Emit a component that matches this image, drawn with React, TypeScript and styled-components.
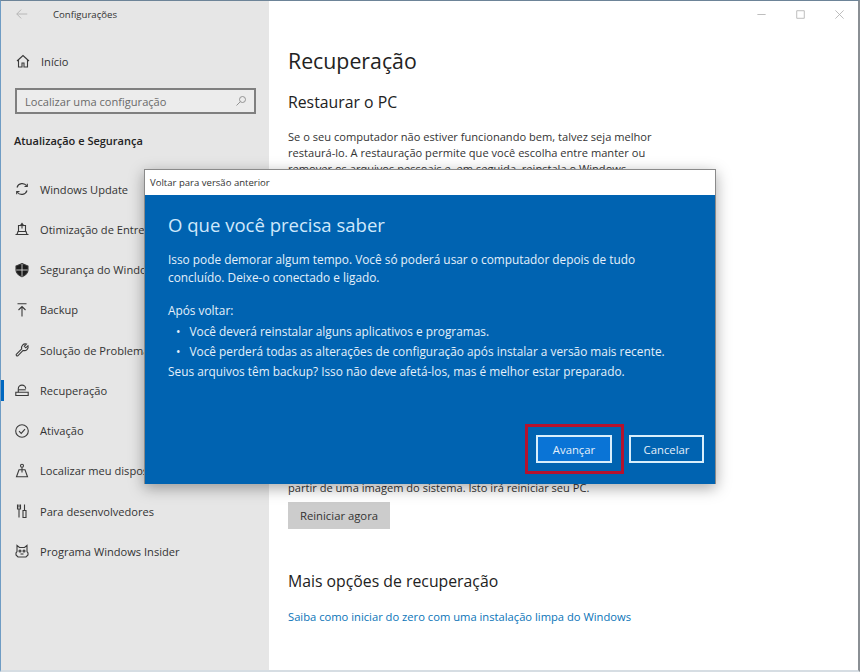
import React from 'react';
import styled, { createGlobalStyle } from 'styled-components';

const Global = createGlobalStyle`
  html, body { margin: 0; padding: 0; background: #fff; }
  body { font-family: "Open Sans", "Noto Sans", "Liberation Sans", sans-serif; color: #222; }
  * { box-sizing: border-box; }
`;
const Win = styled.div`
  position: relative; width: 860px; height: 672px; display: flex; overflow: hidden;
  border-top: 1px solid #6d8498; border-left: 1px solid #6f9cc4; border-right: 2px solid #8a8f94; border-bottom: 2px solid #d6dde3;
`;
const Side = styled.aside`
  width: 268px; flex: none; background: #e6e6e6; display: flex; flex-direction: column;
`;
const TitleRow = styled.div`
  height: 26px; display: flex; align-items: center; padding: 0 0 0 14px; gap: 24px;
  font-size: 9.6px; color: #333;
`;
const BackArrow = styled.svg`
  width: 14px; height: 14px; flex: none; fill: none; stroke: #b5b5b5; stroke-width: 1.1;
`;
const HomeRow = styled.div`
  height: 40px; margin-top: 14px; display: flex; align-items: center; padding-left: 14px; gap: 10px;
  font-size: 11.1px; color: #333;
`;
const Search = styled.div`
  margin: 7px 13px 0 14px; height: 26px; border: 2px solid #7f7f7f; background: #ececec;
  display: flex; align-items: center; justify-content: space-between; padding: 0 7px 0 8px;
  font-size: 11.1px; color: #6a6a6a;
`;
const SearchIcon = styled.svg`
  width: 12px; height: 12px; flex: none; fill: none; stroke: #8a8a8a; stroke-width: 1.2;
`;
const Section = styled.div`
  margin: 18px 0 0 13px; font-size: 11px; font-weight: 600; color: #222; height: 18px; line-height: 18px;
`;
const Nav = styled.nav`
  margin-top: 19px; display: flex; flex-direction: column;
`;
const Item = styled.div<{ $on?: boolean }>`
  position: relative; height: 40.25px; display: flex; align-items: center; padding-left: 13px; gap: 10px;
  font-size: 11.1px; color: #333; white-space: nowrap;
  &::before {
    content: ""; display: ${p => (p.$on ? 'block' : 'none')};
    position: absolute; left: -1px; top: 10px; width: 4px; height: 21px; background: #0067c0;
  }
`;
const Ico = styled.svg`
  width: 16px; height: 16px; flex: none; fill: none; stroke: #3a3a3a; stroke-width: 1.1;
`;
const Main = styled.main`
  flex: 1; padding: 0 0 0 19px; display: flex; flex-direction: column; position: relative;
`;
const Controls = styled.div`
  height: 27px; display: flex; justify-content: flex-end; align-items: center; gap: 28px; padding-right: 13px;
`;
const Ctl = styled.svg`
  width: 11px; height: 11px; flex: none; fill: none; stroke: #b0b0b0; stroke-width: 1.2;
`;
const H1 = styled.h1`
  margin: 17px 0 0; font-weight: 400; font-size: 21.3px; line-height: 32px; color: #222;
`;
const H2 = styled.h2`
  margin: 13px 0 0; font-weight: 400; font-size: 15.8px; line-height: 24px; color: #222;
`;
const Para = styled.p`
  margin: 15px 0 0; width: 385px; font-size: 11.1px; line-height: 16px; color: #333;
`;
const Hidden = styled.div`
  height: 303px;
`;
const Para2 = styled.p`
  margin: 0; font-size: 11.1px; line-height: 16px; color: #333; white-space: nowrap;
`;
const Btn = styled.div`
  margin-top: 6px; width: 102px; height: 27px; background: #cccccc; display: flex; align-items: center;
  justify-content: center; font-size: 11.3px; color: #333;
`;
const H3 = styled.h2`
  margin: 40px 0 0; font-weight: 400; font-size: 15.8px; line-height: 24px; color: #222;
`;
const Link = styled.div`
  margin-top: 16px; font-size: 11.2px; line-height: 16px; color: #0a74b8;
`;
const Dialog = styled.div`
  position: absolute; left: 143px; top: 168px; width: 572px; height: 315px; display: flex; flex-direction: column;
  border: 1px solid #8a8a8a; border-bottom: 0; box-shadow: 0 4px 14px rgba(0,0,0,.35);
`;
const DTitle = styled.div`
  height: 25px; flex: none; background: #fff; padding-left: 5px; font-size: 9.55px; line-height: 25px; color: #333;
`;
const DBody = styled.div`
  flex: 1; background: #0063b1; padding: 16px 23px 0; color: #e4f0fa; display: flex; flex-direction: column;
`;
const DHead = styled.div`
  font-size: 18.55px; line-height: 28px; color: #cfe8fb;
`;
const DText = styled.p`
  margin: 0; font-size: 11.85px; line-height: 18px; white-space: nowrap;
`;
const Intro = styled(DText)`
  margin-top: 11px;
`;
const After = styled(DText)`
  margin-top: 14px; line-height: 21px;
`;
const Bullets = styled.ul`
  margin: 0 0 1px; padding: 0 0 0 8px; font-size: 11.85px; line-height: 20px; white-space: nowrap; list-style: none;
`;
const Bullet = styled.li`
  &::before { content: "•"; margin-right: 9px; }
`;
const Actions = styled.div`
  margin-top: auto; padding: 0 11px 21px 0; margin-right: -23px; display: flex; justify-content: flex-end; gap: 17px;
`;
const DBtn = styled.div<{ $primary?: boolean }>`
  position: relative; width: ${p => (p.$primary ? '76px' : '75px')}; height: 28px; border: 2px solid #d8eefb;
  background: ${p => (p.$primary ? '#0a74d6' : '#0063b1')}; display: flex; align-items: center; justify-content: center;
  font-size: 11.3px; color: #e4f0fa;
`;
const Mark = styled.div`
  position: absolute; left: -13px; top: -13px; right: -14px; bottom: -13px; border: 3px solid #b5122e;
`;

const items: [string, React.ReactNode, boolean?][] = [
  ['Windows Update', <><path d="M3 6.500A5.500 5.500 0 0 1 12.800 5" /><path d="M13.300 2.700V5.500h-2.800" /><path d="M13 9.500A5.500 5.500 0 0 1 3.200 11" /><path d="M2.700 13.300V10.500h2.800" /></>],
  ['Otimização de Entrega', <><path d="M1.500 13.500h13M3 13.500L4 10.500h8l1 3" /><path d="M4.500 10.500V4.500h7v6" /><path d="M8 2.500v5M6 5l2-2.500L10 5" /></>],
  ['Segurança do Windows', <><path d="M8 1.500l6 2.500v4c0 3.500-3 5.500-6 6.800C5 13.500 2 11.500 2 8V4z" fill="#1c1c1c" /><path d="M8 2v12.500M2.300 8h11.400" stroke="#e6e6e6" strokeWidth="0.8" /></>],
  ['Backup', <><path d="M3.500 1.800h9M8 14.500V4.500M4.500 8L8 4.500 11.500 8" /></>],
  ['Solução de Problemas', <path d="M2.300 12.300l5.400-5.400a3.800 3.800 0 0 1 4.700-4.800L10.300 4.300l1.500 1.500 2.200-2.100a3.800 3.800 0 0 1-4.900 4.700l-5.300 5.400a1.100 1.100 0 0 1-1.500-1.500z" />],
  ['Recuperação', <><path d="M1.800 13.500h12.400v-3.200H1.800z" /><path d="M4.300 10.300V6.800a3.700 3.700 0 0 1 7.400 0" /><path d="M4.300 7.800h7.400" /></>, true],
  ['Ativação', <><circle cx="8" cy="8" r="6.300" /><path d="M5 8.200l2.200 2.200L11 6.200" /></>],
  ['Localizar meu dispositivo', <><circle cx="8" cy="2.800" r="1.500" /><path d="M8 4.300v5.200M5 6.800h6l2.500 7H2.500z" /></>],
  ['Para desenvolvedores', <><path d="M5 1.500v3M3.500 1.500v4.500h3V1.500M5 6v8.500M10.500 1.500v6M9 7.500h3v7H9z" /></>],
  ['Programa Windows Insider', <><path d="M3 2.500L5.500 4.500h5L13 2.500v6l1 1.500v2l-2 2H4l-2-2v-2l1-1.500z" /><circle cx="6" cy="8" r="1" /><circle cx="10" cy="8" r="1" /><path d="M6.500 11h3" /></>],
];

export default function App() {
  return (
    <>
      <Global />
      <Win>
        <Side>
          <TitleRow>
            <BackArrow viewBox="0 0 16 16"><path d="M14 8H2M7 3L2 8l5 5" /></BackArrow>
            <span>Configurações</span>
          </TitleRow>
          <HomeRow>
            <Ico viewBox="0 0 16 16"><path d="M2 8l6-5.500L14 8M3.500 7v7H7v-4h2v4h3.500V7" /></Ico>
            <span>Início</span>
          </HomeRow>
          <Search>
            <span>Localizar uma configuração</span>
            <SearchIcon viewBox="0 0 16 16"><circle cx="10" cy="6" r="4" /><path d="M7 9l-5 5" /></SearchIcon>
          </Search>
          <Section>Atualização e Segurança</Section>
          <Nav>
            {items.map(([label, icon, on]) => (
              <Item key={label} $on={on}>
                <Ico viewBox="0 0 16 16">{icon}</Ico>
                <span>{label}</span>
              </Item>
            ))}
          </Nav>
        </Side>
        <Main>
          <Controls>
            <Ctl viewBox="0 0 16 16"><path d="M2 8h12" /></Ctl>
            <Ctl viewBox="0 0 16 16"><path d="M2.500 2.500h11v11h-11z" /></Ctl>
            <Ctl viewBox="0 0 16 16"><path d="M2 2l12 12M14 2L2 14" /></Ctl>
          </Controls>
          <H1>Recuperação</H1>
          <H2>Restaurar o PC</H2>
          <Para>
            Se o seu computador não estiver funcionando bem, talvez seja melhor restaurá-lo. A restauração permite que você escolha entre manter ou remover os arquivos pessoais e, em seguida, reinstala o Windows.
          </Para>
          <Hidden />
          <Para2>partir de uma imagem do sistema. Isto irá reiniciar seu PC.</Para2>
          <Btn>Reiniciar agora</Btn>
          <H3>Mais opções de recuperação</H3>
          <Link>Saiba como iniciar do zero com uma instalação limpa do Windows</Link>
        </Main>
        <Dialog>
          <DTitle>Voltar para versão anterior</DTitle>
          <DBody>
            <DHead>O que você precisa saber</DHead>
            <Intro>Isso pode demorar algum tempo. Você só poderá usar o computador depois de tudo<br />concluído. Deixe-o conectado e ligado.</Intro>
            <After>Após voltar:</After>
            <Bullets>
              <Bullet>Você deverá reinstalar alguns aplicativos e programas.</Bullet>
              <Bullet>Você perderá todas as alterações de configuração após instalar a versão mais recente.</Bullet>
            </Bullets>
            <DText>Seus arquivos têm backup? Isso não deve afetá-los, mas é melhor estar preparado.</DText>
            <Actions>
              <DBtn $primary>Avançar<Mark /></DBtn>
              <DBtn>Cancelar</DBtn>
            </Actions>
          </DBody>
        </Dialog>
      </Win>
    </>
  );
}
